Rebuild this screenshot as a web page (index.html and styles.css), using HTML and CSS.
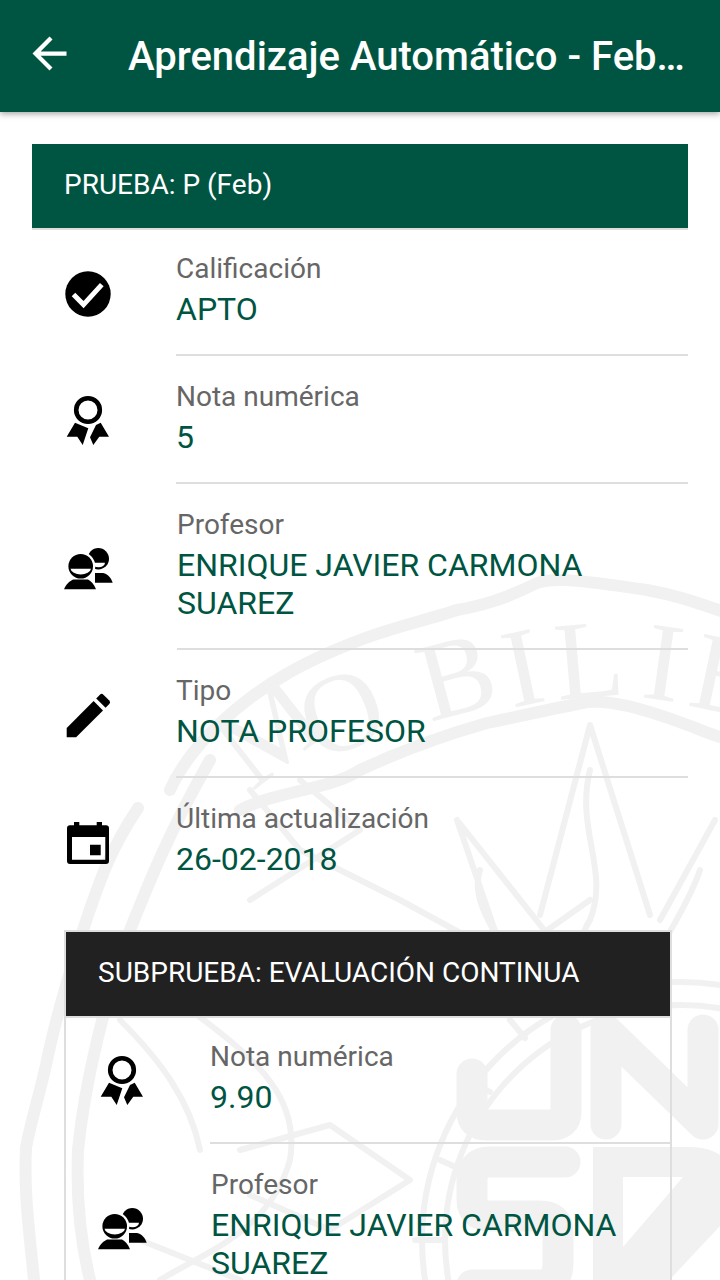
FILE: index.html
```html
<!DOCTYPE html>
<html lang="es">
<head>
<meta charset="utf-8">
<title>Aprendizaje Automático</title>
<link rel="stylesheet" href="styles.css">
</head>
<body>
<svg class="watermark" viewBox="0 0 720 1280" aria-hidden="true">
  <g class="wm-line">
    <path d="M170 790C190 745 240 700 290 672C320 655 340 648 360 640C390 628 427 620 457 610C480 606 503 600 537 583C550 578 567 578 647 590C680 596 700 604 730 614"/>
    <path d="M240 810C280 790 330 790 360 770C390 756 427 740 487 723C520 716 547 710 587 702C610 700 640 707 693 727C705 732 715 736 730 740"/>
    <path d="M138 808C110 850 100 880 87 918C70 970 55 1020 46 1065C38 1100 30 1125 26 1148C24 1190 28 1220 34 1280"/>
    <path d="M210 760C170 830 150 880 130 930C105 1000 85 1080 78 1150C76 1200 80 1240 90 1280"/>
    <path d="M590 725L540 915M590 725L650 915" class="wm-thin"/>
    <path d="M457 820L505 960L590 900M715 820L660 920M457 820L560 950" class="wm-thin"/>
    <path d="M480 870C470 900 495 930 510 960M700 870C690 900 670 930 660 950M590 770C575 830 610 870 590 920C570 950 600 965 610 960" class="wm-thin"/>
    <path d="M250 790L300 850L400 900L510 960M300 780L360 830L250 900" class="wm-thin"/>
    <path d="M190 1010C260 1060 300 1100 290 1160C270 1230 210 1250 160 1280" class="wm-thin"/>
    <path d="M240 1150L330 1125L410 1180L330 1230L250 1195" class="wm-thin"/>
    <circle cx="680" cy="1240" r="258" class="wm-thin"/>
    <circle cx="680" cy="1240" r="235" class="wm-thin"/>
    <path d="M440 1160L462 1170M470 1080L490 1092M510 1020L525 1038M560 990L570 1012M415 1240L445 1240" class="wm-thin"/>
    <path d="M120 1020C160 1060 190 1100 200 1150M150 1000L300 950M140 1240L240 1280" class="wm-thin"/>
  </g>
  <g class="wm-block">
    <path d="M472 1074V1112Q472 1125 486 1125H552Q566 1125 566 1112V1030"/>
    <path d="M606 1124V1030L703 1124V1030"/>
    <path d="M565 1162H490Q472 1162 472 1180V1200Q472 1216 490 1216H540Q558 1216 558 1232V1262Q558 1285 540 1285H472"/>
    <path class="wm-solid" d="M593 1147H690Q725 1147 735 1175V1210L660 1290H593zM623 1177V1247L683 1177z"/>
  </g>
  <g class="wm-letters">
    <text transform="translate(252 792) rotate(-38)">M</text>
    <text transform="translate(318 762) rotate(-22)">O</text>
    <text transform="translate(430 722) rotate(-15)">B</text>
    <text transform="translate(512 708) rotate(-12)">I</text>
    <text transform="translate(558 700) rotate(-5)">L</text>
    <text transform="translate(640 697) rotate(8)">I</text>
    <text transform="translate(686 705) rotate(12)">E</text>
  </g>
</svg>

<svg class="icon-defs" aria-hidden="true">
  <symbol id="i-check" viewBox="0 0 48 48">
    <circle cx="24" cy="24" r="22.7" fill="#000"/>
    <path d="M9.500 24.600L19.500 34.600L37.800 14.600" fill="none" stroke="#fff" stroke-width="5"/>
  </symbol>
  <symbol id="i-medal" viewBox="0 0 48 56">
    <circle cx="24" cy="16" r="11.8" fill="none" stroke="#000" stroke-width="4.6"/>
    <path d="M2.700 42.700L11 28.700L24.300 34.300L18.700 51L13.300 42.700zM36.700 28.700L45 42.700H35.300L29.300 51L26 43.300L32 31z" fill="#000"/>
  </symbol>
  <symbol id="i-people" viewBox="0 0 50 46">
    <path d="M31 36.700V27H39C44 28 47 32 48.700 36.700z" fill="#000"/>
    <circle cx="34.300" cy="12.700" r="10.700" fill="#000"/>
    <path d="M28 16.700H41A6.500 4.600 0 0 1 28 16.700z" fill="#fff"/>
    <circle cx="16.700" cy="20.300" r="14.600" fill="#fff"/>
    <path d="M0 43.300C2 38 6 35 9 33.500H24C27 35 30 38 32 43.300z" fill="#000"/>
    <circle cx="16.700" cy="20.300" r="12.300" fill="#000"/>
    <path d="M6.500 22.700H27A10.300 6.300 0 0 1 6.500 22.700z" fill="#fff"/>
  </symbol>
  <symbol id="i-pen" viewBox="0 0 48 48">
    <path d="M2.700 35.900V45.300H12.100L39 18.400L29.600 9z" fill="#000"/>
    <path d="M45.300 12.100a2.500 2.500 0 0 0 0-3.500L39.400 2.700a2.500 2.500 0 0 0-3.500 0L32.200 6.400L41.600 15.800z" fill="#000"/>
  </symbol>
  <symbol id="i-cal" viewBox="0 0 48 48">
    <path d="M10 2H15.300V5.300H32.700V2H38V5.300H42A3 3 0 0 1 45 8.300V41A3 3 0 0 1 42 44H6A3 3 0 0 1 3 41V8.300A3 3 0 0 1 6 5.300H10zM8 17V39.700H41.300V17zM26 24.700H36.700V35.300H26z" fill="#000" fill-rule="evenodd"/>
  </symbol>
</svg>

<header class="appbar">
  <svg class="back" viewBox="0 0 24 24" aria-hidden="true"><path d="M20 11H7.830l5.590-5.590L12 4l-8 8 8 8 1.410-1.410L7.830 13H20v-2z"/></svg>
  <h1 class="appbar-title">Aprendizaje Automático - Feb…</h1>
</header>

<main class="content">
  <section class="section">
    <h2 class="section-head">PRUEBA: P (Feb)</h2>
    <div class="row">
      <div class="row-icon"><svg class="ic ic-48"><use href="#i-check"/></svg></div>
      <div class="row-body"><div class="label">Calificación</div><div class="value">APTO</div></div>
    </div>
    <div class="row">
      <div class="row-icon"><svg class="ic ic-medal"><use href="#i-medal"/></svg></div>
      <div class="row-body"><div class="label">Nota numérica</div><div class="value">5</div></div>
    </div>
    <div class="row">
      <div class="row-icon row-icon-shift"><svg class="ic ic-people"><use href="#i-people"/></svg></div>
      <div class="row-body row-body-shift"><div class="label">Profesor</div><div class="value">ENRIQUE JAVIER CARMONA SUAREZ</div></div>
    </div>
    <div class="row">
      <div class="row-icon"><svg class="ic ic-48"><use href="#i-pen"/></svg></div>
      <div class="row-body"><div class="label">Tipo</div><div class="value">NOTA PROFESOR</div></div>
    </div>
    <div class="row">
      <div class="row-icon"><svg class="ic ic-48"><use href="#i-cal"/></svg></div>
      <div class="row-body row-body-last"><div class="label">Última actualización</div><div class="value">26-02-2018</div></div>
    </div>

    <section class="subcard">
      <h3 class="section-head section-head-dark">SUBPRUEBA: EVALUACIÓN CONTINUA</h3>
      <div class="row">
        <div class="row-icon"><svg class="ic ic-medal"><use href="#i-medal"/></svg></div>
        <div class="row-body"><div class="label">Nota numérica</div><div class="value">9.90</div></div>
      </div>
      <div class="row">
        <div class="row-icon row-icon-shift"><svg class="ic ic-people"><use href="#i-people"/></svg></div>
        <div class="row-body row-body-shift"><div class="label">Profesor</div><div class="value">ENRIQUE JAVIER CARMONA SUAREZ</div></div>
      </div>
    </section>
  </section>
</main>
</body>
</html>
```

FILE: styles.css
```css
* { box-sizing: border-box; }
html, body { margin: 0; height: 1280px; overflow: hidden; background: #fff; }
body { position: relative; font-family: Roboto, "Liberation Sans", sans-serif; }

.watermark { position: absolute; left: 0; top: 0; width: 720px; height: 1280px; }
.wm-line path, .wm-line circle { fill: none; stroke: #f1f1f1; stroke-width: 12; stroke-linecap: round; stroke-linejoin: round; }
.wm-line .wm-thin { stroke-width: 6; }
.wm-block path { fill: none; stroke: #f1f1f1; stroke-width: 31; stroke-linecap: round; stroke-linejoin: round; }
.wm-block .wm-solid { fill: #f1f1f1; fill-rule: evenodd; stroke: none; }
.wm-letters text { font-family: "Liberation Serif", serif; font-size: 112px; fill: #f1f1f1; }
.icon-defs { position: absolute; width: 0; height: 0; }

.appbar {
  position: relative;
  height: 112px;
  background: #005542;
  box-shadow: 0 2px 6px rgba(0, 0, 0, .35);
  display: flex;
  align-items: center;
  padding: 0 24px;
  color: #fff;
}
.back { width: 51px; height: 51px; fill: #fff; flex: none; margin: -6px 0 0 0; }
.appbar-title {
  margin: 2px 0 0 53px;
  font-size: 40px;
  font-weight: 500;
  line-height: 56px;
  white-space: nowrap;
}

.content { position: relative; padding: 32px; }
.section-head {
  position: relative;
  margin: 0;
  height: 84px;
  padding: 0 32px;
  background: #005542;
  color: #fff;
  font-size: 28px;
  font-weight: 400;
  line-height: 82px;
  box-shadow: 0 2px 0 #dedede;
}
.section-head-dark { background: #212121; }

.row { display: flex; }
.row-icon { flex: none; width: 112px; display: flex; justify-content: center; align-items: center; padding-top: 3px; }
.row-icon-shift { padding-left: 1px; }
.row-body { flex: 1; min-width: 0; margin-left: 32px; padding: 21px 0 26px; border-bottom: 2px solid #dedede; }
.row-body-shift { margin-left: 33px; }
.row-body-last { border-bottom-color: transparent; }

.label { font-size: 28px; line-height: 40px; margin-bottom: 1px; color: #666; }
.value { font-size: 32px; line-height: 38px; color: #005542; }

.ic { display: block; }
.ic-48 { width: 48px; height: 48px; }
.ic-medal { width: 48px; height: 56px; }
.ic-people { width: 50px; height: 46px; }

.subcard { margin: 24px 16px 0 32px; border: 2px solid #dedede; }
```
